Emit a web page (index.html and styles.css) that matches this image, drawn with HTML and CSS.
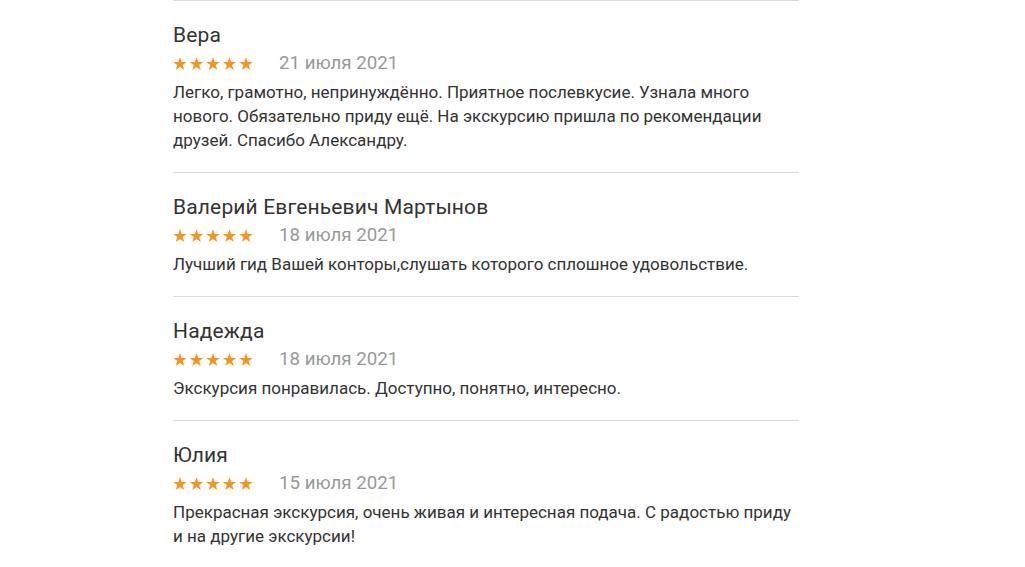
FILE: index.html
```html
<!DOCTYPE html>
<html lang="ru">
<head>
<meta charset="utf-8">
<link rel="stylesheet" href="styles.css">
</head>
<body>
<div class="reviews">
  <div class="review">
    <div class="name">Вера</div>
    <div class="meta">
      <svg class="stars" width="81" height="14" viewBox="0 0 81 14"><g fill="#f7941d"><polygon id="s" points="7,0 8.65,4.9 13.8,4.9 9.65,8 11.2,13 7,9.9 2.8,13 4.35,8 0.2,4.9 5.35,4.9"/><use href="#s" x="16.5"/><use href="#s" x="33"/><use href="#s" x="49.5"/><use href="#s" x="66"/></g></svg>
      <span class="date">21 июля 2021</span>
    </div>
    <p class="text">Легко, грамотно, непринуждённо. Приятное послевкусие. Узнала много нового. Обязательно приду ещё. На экскурсию пришла по рекомендации друзей. Спасибо Александру.</p>
  </div>
  <div class="review">
    <div class="name">Валерий Евгеньевич Мартынов</div>
    <div class="meta">
      <svg class="stars" width="81" height="14" viewBox="0 0 81 14"><g fill="#f7941d"><polygon id="s2" points="7,0 8.65,4.9 13.8,4.9 9.65,8 11.2,13 7,9.9 2.8,13 4.35,8 0.2,4.9 5.35,4.9"/><use href="#s2" x="16.5"/><use href="#s2" x="33"/><use href="#s2" x="49.5"/><use href="#s2" x="66"/></g></svg>
      <span class="date">18 июля 2021</span>
    </div>
    <p class="text">Лучший гид Вашей конторы,слушать которого сплошное удовольствие.</p>
  </div>
  <div class="review">
    <div class="name">Надежда</div>
    <div class="meta">
      <svg class="stars" width="81" height="14" viewBox="0 0 81 14"><g fill="#f7941d"><polygon id="s3" points="7,0 8.65,4.9 13.8,4.9 9.65,8 11.2,13 7,9.9 2.8,13 4.35,8 0.2,4.9 5.35,4.9"/><use href="#s3" x="16.5"/><use href="#s3" x="33"/><use href="#s3" x="49.5"/><use href="#s3" x="66"/></g></svg>
      <span class="date">18 июля 2021</span>
    </div>
    <p class="text">Экскурсия понравилась. Доступно, понятно, интересно.</p>
  </div>
  <div class="review">
    <div class="name">Юлия</div>
    <div class="meta">
      <svg class="stars" width="81" height="14" viewBox="0 0 81 14"><g fill="#f7941d"><polygon id="s4" points="7,0 8.65,4.9 13.8,4.9 9.65,8 11.2,13 7,9.9 2.8,13 4.35,8 0.2,4.9 5.35,4.9"/><use href="#s4" x="16.5"/><use href="#s4" x="33"/><use href="#s4" x="49.5"/><use href="#s4" x="66"/></g></svg>
      <span class="date">15 июля 2021</span>
    </div>
    <p class="text">Прекрасная экскурсия, очень живая и интересная подача. С радостью приду и на другие экскурсии!</p>
  </div>
</div>
</body>
</html>
```

FILE: styles.css
```css
html, body {
  margin: 0;
  padding: 0;
  background: #fff;
}

body {
  font-family: Roboto, "Noto Sans", sans-serif;
  color: #333;
}

.reviews {
  width: 626px;
  margin-left: 173px;
}

.review {
  border-top: 1px solid #dcdcdc;
  padding: 20px 0 20px;
}

.name {
  font-size: 21px;
  line-height: 28px;
  color: #333;
  letter-spacing: 0.15px;
}

.meta {
  display: flex;
  align-items: center;
  height: 28px;
  gap: 25px;
}

.stars {
  display: block;
  margin-top: 2px;
}

.date {
  font-size: 18.7px;
  color: #999;
  line-height: 28px;
}

.text {
  margin: 3px 0 0;
  font-size: 17px;
  line-height: 24px;
  color: #333;
}
```
